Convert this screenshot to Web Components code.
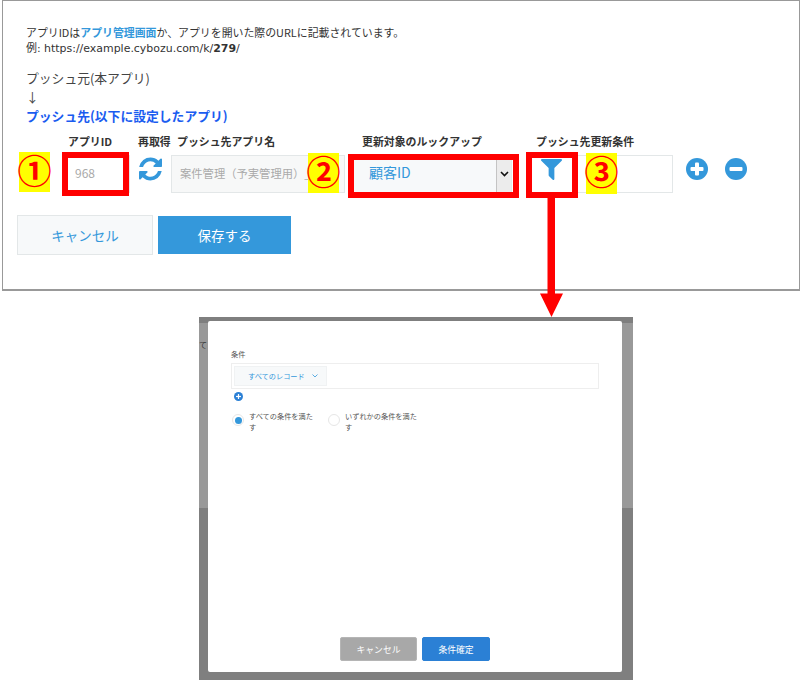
<!DOCTYPE html>
<html lang="ja"><head><meta charset="utf-8"><style>
html,body{margin:0;padding:0;background:#fff;width:800px;height:680px;overflow:hidden}
body{font-family:"Noto Sans CJK JP","Noto Sans",sans-serif;color:#333;position:relative}
</style></head><body>
<settings-panel></settings-panel>
<condition-modal></condition-modal>
<mark-badge style="left:19px;top:152px;height:40px">①</mark-badge>
<mark-badge style="left:308px;top:153px;height:40px">②</mark-badge>
<mark-badge style="left:586px;top:153px;height:41px">③</mark-badge>
<mark-rect style="left:62px;top:152px;width:67px;height:44px"></mark-rect>
<mark-rect style="left:348px;top:154px;width:171px;height:44px"></mark-rect>
<mark-rect style="left:526px;top:152px;width:52px;height:46px"></mark-rect>
<mark-arrow></mark-arrow>
<script>
const CJK='"Noto Sans CJK JP","Noto Sans",sans-serif';
function def(name,html){customElements.define(name,class extends HTMLElement{constructor(){super();this.attachShadow({mode:'open'}).innerHTML=html;}});}
const FILTER='M1595 295q17 41-14 70l-493 493v742q0 42-39 59-13 5-25 5-27 0-45-19l-256-256q-19-19-19-45v-486l-493-493q-31-29-14-70 17-39 59-39h1280q42 0 59 39z';
const REFRESH='M1639 1056q0 5-1 7-64 268-268 434.5t-478 166.5q-146 0-282.5-55t-243.5-157l-129 129q-19 19-45 19t-45-19-19-45v-448q0-26 19-45t45-19h448q26 0 45 19t19 45-19 45l-137 137q71 66 161 102t187 36q134 0 250-65t186-179q11-17 53-117 8-23 30-23h192q13 0 22.5 9.5t9.5 22.5zm25-800v448q0 26-19 45t-45 19h-448q-26 0-45-19t-19-45 19-45l138-138q-148-137-349-137-134 0-250 65t-186 179q-11 17-53 117-8 23-30 23h-199q-13 0-22.5-9.5t-9.5-22.5v-7q65-268 270-434.5t480-166.5q146 0 284 55.5t245 156.5l130-129q19-19 45-19t45 19 19 45z';

def('mark-badge',`<style>:host{position:absolute;display:flex;align-items:center;justify-content:center;box-sizing:border-box;padding-bottom:5px;width:31px;background:#ff0;color:#f00;font:700 34px/1 ${CJK}}</style><slot></slot>`);
def('mark-rect',`<style>:host{position:absolute;display:block;box-sizing:border-box;border:6px solid #f00}</style>`);
def('mark-arrow',`<style>:host{position:absolute;left:540px;top:198px;display:block;width:23px;height:119px}svg{display:block}</style>
<svg width="23" height="119" viewBox="0 0 23 119"><path d="M7.500 0H15V95.500H23L11.500 119 0 95.500H7.500z" fill="#f00"/></svg>`);

def('info-text',`<style>:host{display:block;font-size:10.900px;line-height:16px;color:#333}
a{color:#3498db;font-weight:700;text-decoration:none}.m{font-family:"DejaVu Sans",${CJK};font-size:10.950px;margin-top:1px}b{font-weight:700}</style>
<div>アプリIDは<a>アプリ管理画面</a>か、アプリを開いた際のURLに記載されています。</div>
<div class="m">例: https://example.cybozu.com/k/<b>279</b>/</div>`);

def('push-flow',`<style>:host{display:block;font-size:12.800px;line-height:19px;color:#444}
.b{color:#1a5cf0;font-weight:700}</style>
<div>プッシュ元(本アプリ)</div><div>↓</div><div class="b">プッシュ先(以下に設定したアプリ)</div>`);

def('form-field',`<style>:host{display:flex;flex-direction:column;flex:none}
.l{height:21px;font-size:10.900px;font-weight:700;line-height:14px;color:#333;white-space:nowrap;padding-left:var(--lp,0)}
.b{height:38px;box-sizing:border-box;border:1px solid #e3e7e8;background:var(--bg,#fff);display:flex;align-items:center;
color:var(--c,#999);font-size:var(--fs,11.300px);padding:0 0 3px var(--ip,8px);overflow:hidden;white-space:nowrap;position:relative}
</style><div class="l"><slot name="label"></slot></div><div class="b"><slot></slot></div>`);

def('lookup-select',`<style>:host{display:flex;align-items:center;width:100%;height:38px;margin-bottom:-3px;justify-content:space-between}
.t{padding:0 0 4px 15px}
.a{width:15px;height:36px;background:#ececec;border-left:1px solid #c4c4c4;display:flex;align-items:center;justify-content:center;box-sizing:border-box}
</style><span class="t"><slot></slot></span><span class="a"><svg width="9" height="6" viewBox="0 0 9 6"><path d="M1 1l3.500 3.500L8 1" fill="none" stroke="#111" stroke-width="1.600"/></svg></span>`);

def('refresh-field',`<style>:host{display:flex;flex-direction:column;flex:none;width:34px}
.l{height:21px;font-size:10.900px;font-weight:700;line-height:14px;white-space:nowrap;color:#333;padding-left:1px}
svg{display:block;margin:2px 0 0 2px}</style><div class="l"><slot></slot></div>
<svg width="23" height="24" viewBox="128 128 1536 1536"><path fill="#3498db" d="${REFRESH}"/></svg>`);

def('round-btn',`<style>:host{display:block;width:22px;height:22px}svg{display:block}</style>
<svg width="22" height="22" viewBox="0 0 22 22"><circle cx="11" cy="11" r="11" fill="#3498db"/><rect x="4.500" y="9" width="13" height="4" rx="1" fill="#fff"/><rect x="9" y="4.500" width="4" height="13" rx="1" fill="var(--v,#fff)"/></svg>`);

def('action-btn',`<style>:host{display:flex;align-items:center;justify-content:center;box-sizing:border-box;flex:none;
width:var(--w);height:var(--h);margin-top:var(--mt,0);background:var(--bg);color:var(--c);border:1px solid var(--bd);font-size:var(--fs,13.500px);border-radius:var(--r,0)}</style><slot></slot>`);

def('settings-panel',`<style>
:host{display:block;box-sizing:border-box;margin-left:2px;width:798px;height:291px;border:solid #999;border-width:1px 1px 2px 1px;padding:23px 0 0 23px}
.row{display:flex;margin:9px 0 0 0;height:60px}
.btns{display:flex;gap:5px;margin:21px 0 0 -9px;align-items:flex-start}
.acts{display:flex;gap:17px;margin:24px 0 0 13px;align-self:flex-start}
push-flow{margin-top:11px}
.ic{display:block;margin-bottom:6px}
</style>
<info-text></info-text>
<push-flow></push-flow>
<div class="row">
 <form-field style="margin-left:41px;width:63px;--lp:1px;--ip:7px;--c:#aaa;--fs:12px"><span slot="label">アプリID</span>968</form-field>
 <refresh-field style="margin-left:7px">再取得</refresh-field>
 <form-field style="width:174px;--lp:6px;--bg:#f7f8f8;--c:#aaa"><span slot="label">プッシュ先アプリ名</span>案件管理（予実管理用）_</form-field>
 <form-field style="margin-left:8px;width:159px;--lp:9px;--ip:0px;--c:#3498db;--bg:#f7f9fa;--fs:14px"><span slot="label">更新対象のルックアップ</span><lookup-select>顧客ID</lookup-select></form-field>
 <form-field style="margin-left:14px;width:147px;--lp:10px;--ip:14px"><span slot="label">プッシュ先更新条件</span><svg class="ic" width="21" height="21" viewBox="192 256 1408 1408"><path fill="#3498db" d="${FILTER}"/></svg></form-field>
 <div class="acts"><round-btn></round-btn><round-btn style="--v:transparent"></round-btn></div>
</div>
<div class="btns">
 <action-btn style="--w:136px;--h:40px;--bg:#f7f9fa;--c:#3498db;--bd:#e3e7e8">キャンセル</action-btn>
 <action-btn style="--w:133px;--h:38px;--mt:1px;--bg:#3498db;--c:#fff;--bd:#3498db">保存する</action-btn>
</div>`);

def('radio-option',`<style>:host{display:flex;flex:none;width:96px;font-size:7.200px;line-height:11px;color:#555}
i{flex:none;box-sizing:border-box;width:12px;height:12px;border-radius:50%;margin:3px 5px 0 -1px;border:1px solid #e6e6e6;background:#fff;display:flex;align-items:center;justify-content:center}
i b{width:7px;height:7px;border-radius:50%;background:var(--dot,transparent)}
span{width:var(--tw,74px)}</style><i><b></b></i><span><slot></slot></span>`);

def('condition-modal',`<style>
:host{display:block;box-sizing:border-box;margin:26px 0 0 199px;width:434px;height:363px;padding:4px 11px 8px 9px;
background:linear-gradient(#7f7f7f 0 6px,#999 6px 191px,#7f7f7f 191px);position:relative;overflow:hidden}
.d{height:351px;box-sizing:border-box;background:#fff;border-radius:2px;padding:27px 23px 11px 23px;display:flex;flex-direction:column}
.t{font-size:7.200px;line-height:12px;color:#555}
.box{box-sizing:border-box;margin-top:3px;height:26px;border:1px solid #eee;padding:2px;display:flex}
.sel{width:93px;background:#f7f9fa;border:1px solid #f0f2f3;box-sizing:border-box;color:#3498db;font-size:7.200px;display:flex;align-items:center;padding-left:13px;gap:7px;white-space:nowrap}
.add{display:block;margin:3px 0 0 3px}
.radios{display:flex;margin:10px 0 0 2px}
.foot{margin-top:auto;display:flex;gap:5px;padding-left:109px}
.bg{position:absolute;left:0;top:22px;font-size:8px;color:#333;width:8px;overflow:hidden}
</style>
<span class="bg">て</span>
<div class="d">
 <div class="t">条件</div>
 <div class="box"><div class="sel">すべてのレコード<svg width="6" height="4" viewBox="0 0 6 4"><path d="M.5.5L3 3 5.500.5" fill="none" stroke="#3498db" stroke-width=".8"/></svg></div></div>
 <svg class="add" width="9" height="9" viewBox="0 0 22 22"><circle cx="11" cy="11" r="11" fill="#2b80d5"/><rect x="5" y="9.500" width="12" height="3" fill="#fff"/><rect x="9.500" y="5" width="3" height="12" fill="#fff"/></svg>
 <div class="radios"><radio-option style="--dot:#3498db;--tw:68px">すべての条件を満たす</radio-option><radio-option>いずれかの条件を満たす</radio-option></div>
 <div class="foot">
  <action-btn style="--w:77px;--h:24px;--bg:#a8a8a8;--c:#fff;--bd:#b5b5b5;--fs:8.800px;--r:2px">キャンセル</action-btn>
  <action-btn style="--w:68px;--h:24px;--bg:#2b80d5;--c:#fff;--bd:#2b80d5;--fs:8.800px;--r:2px">条件確定</action-btn>
 </div>
</div>`);
</script>
</body></html>
